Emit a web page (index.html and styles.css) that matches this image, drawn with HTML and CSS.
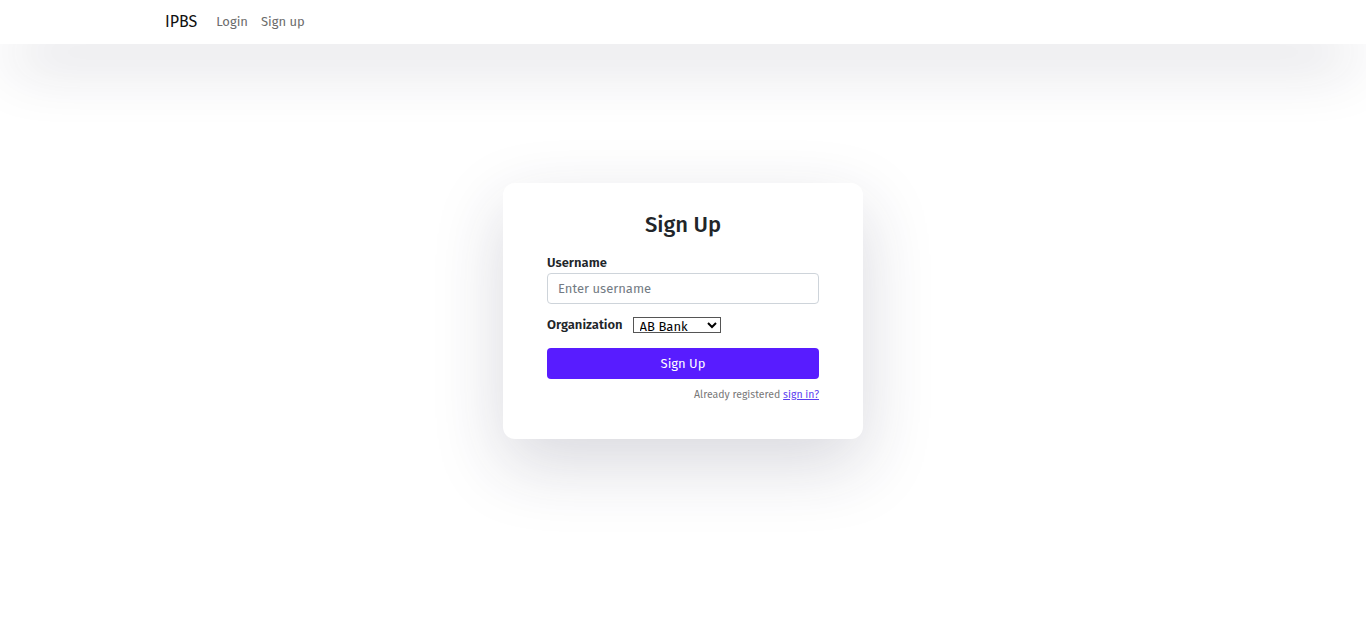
FILE: index.html
```html
<!DOCTYPE html>
<html lang="en">
<head>
<meta charset="utf-8">
<title>IPBS - Sign Up</title>
<link rel="stylesheet" href="styles.css">
</head>
<body>
<header class="navbar">
  <nav class="nav-inner">
    <a class="brand" href="#">IPBS</a>
    <a class="nav-link" href="#">Login</a>
    <a class="nav-link" href="#">Sign up</a>
  </nav>
</header>
<main class="page">
  <section class="card">
    <h1 class="title">Sign Up</h1>
    <form class="form">
      <div class="field">
        <label class="label" for="username">Username</label>
        <input class="input" id="username" type="text" placeholder="Enter username">
      </div>
      <div class="org-row">
        <label class="label" for="org">Organization</label>
        <select class="select" id="org">
          <option>AB Bank</option>
        </select>
      </div>
      <button class="btn" type="button">Sign Up</button>
      <p class="already">Already registered <a href="#">sign in?</a></p>
    </form>
  </section>
</main>
</body>
</html>
```

FILE: styles.css
```css
* { box-sizing: border-box; }
html, body { margin: 0; padding: 0; background: #fff; }
body {
  font-family: "Fira Sans", Roboto, "Liberation Sans", sans-serif;
  color: #212529;
  min-height: 623px;
}
.navbar {
  height: 44px;
  background: #fff;
  box-shadow: 0 30px 60px -14px rgba(30, 30, 60, 0.3);
  position: relative;
  z-index: 1;
}
.nav-inner {
  max-width: 1036px;
  margin: 0 auto;
  height: 44px;
  padding-bottom: 2px;
  display: flex;
  align-items: center;
  gap: 13px;
}
.brand {
  font-size: 16px;
  color: #111;
  text-decoration: none;
  margin-right: 6px;
}
.nav-link {
  font-size: 13px;
  color: #6c6c6c;
  text-decoration: none;
}
.page {
  display: flex;
  justify-content: center;
  padding-top: 139px;
}
.card {
  width: 360px;
  background: #fff;
  border-radius: 12px;
  padding: 28px 44px 36px;
  box-shadow: 0 25px 70px rgba(40, 40, 70, 0.18);
}
.title {
  margin: 0 0 15px;
  text-align: center;
  font-size: 22px;
  font-weight: 500;
  color: #212529;
  line-height: 28px;
}
.form { display: flex; flex-direction: column; }
.field { display: flex; flex-direction: column; gap: 1px; }
.label {
  font-size: 13px;
  font-weight: 600;
  color: #212529;
  line-height: 18px;
}
.input {
  height: 31px;
  width: 100%;
  border: 1px solid #ced4da;
  border-radius: 4px;
  padding: 0 10px;
  font-family: inherit;
  font-size: 13px;
  color: #212529;
}
.input::placeholder { color: #737b84; }
.org-row {
  display: flex;
  align-items: center;
  gap: 10px;
  margin-top: 12px;
}
.select {
  width: 88px;
  height: 16px;
  font-family: inherit;
  font-size: 13px;
  border: 1px solid #555;
  border-radius: 0;
  padding: 0 2px;
  background: #fff;
  color: #000;
}
.btn {
  margin-top: 14px;
  height: 31px;
  width: 100%;
  border: none;
  border-radius: 4px;
  background: #581cff;
  color: #fff;
  font-family: inherit;
  font-size: 13px;
  font-weight: 400;
  cursor: pointer;
}
.already {
  margin: 8px 0 0;
  text-align: right;
  font-size: 10.5px;
  color: #777;
  line-height: 16px;
}
.already a { color: #5a3cf0; }
```
